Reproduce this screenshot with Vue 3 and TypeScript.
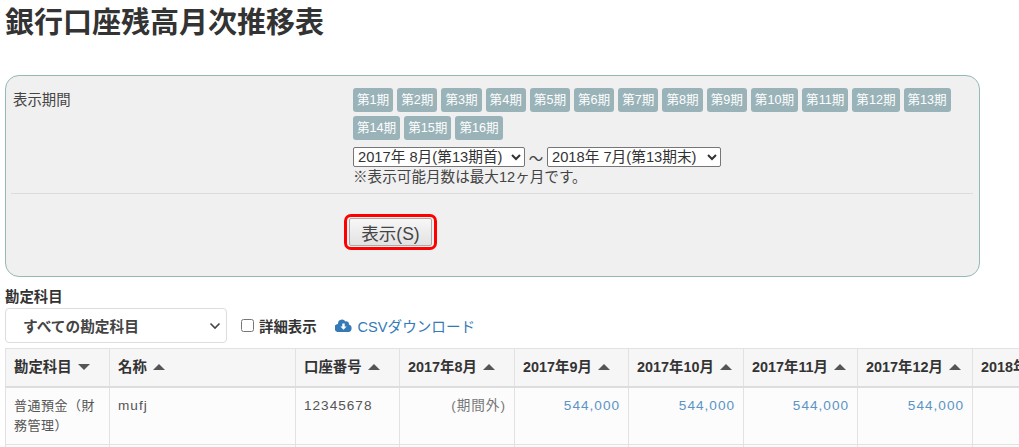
<script setup lang="ts">
const periods = Array.from({ length: 16 }, (_, i) => `第${i + 1}期`);

interface Column {
  label: string;
  width: number;
  dir: "up" | "down";
}

const columns: Column[] = [
  { label: "勘定科目", width: 104, dir: "down" },
  { label: "名称", width: 186, dir: "up" },
  { label: "口座番号", width: 104, dir: "up" },
  { label: "2017年8月", width: 115, dir: "up" },
  { label: "2017年9月", width: 114, dir: "up" },
  { label: "2017年10月", width: 115, dir: "up" },
  { label: "2017年11月", width: 114, dir: "up" },
  { label: "2017年12月", width: 115, dir: "up" },
  { label: "2018年1月", width: 115, dir: "up" },
];

const amounts = ["544,000", "544,000", "544,000", "544,000"];
</script>

<template>
  <div class="page">
    <h2 class="title">銀行口座残高月次推移表</h2>

    <form class="panel" @submit.prevent>
      <div class="panel-row">
        <div class="panel-label">表示期間</div>
        <div class="panel-body">
          <div class="periods">
            <span v-for="p in periods" :key="p" class="period">{{ p }}</span>
          </div>
          <div class="range">
            <select class="range-select">
              <option>2017年 8月(第13期首)</option>
            </select>
            <span class="tilde">～</span>
            <select class="range-select">
              <option>2018年 7月(第13期末)</option>
            </select>
          </div>
          <div class="note">※表示可能月数は最大12ヶ月です。</div>
        </div>
      </div>
      <div class="panel-actions">
        <div class="highlight">
          <button class="submit" type="submit">表示(S)</button>
        </div>
      </div>
    </form>

    <div class="filter-label">勘定科目</div>
    <div class="filters">
      <div class="account-select">
        <span>すべての勘定科目</span>
        <svg class="chevron" width="12" height="8" viewBox="0 0 12 8">
          <path d="M1.500 1.500 6 6l4.500-4.500" fill="none" stroke="#444" stroke-width="1.600" />
        </svg>
      </div>
      <label class="detail">
        <input type="checkbox" class="detail-check" />
        <span>詳細表示</span>
      </label>
      <a class="csv" href="#">
        <svg class="cloud" width="17" height="13" viewBox="0 0 17 13">
          <path
            d="M13.800 5.600A2.600 2.600 0 0 0 10.400 2.400 4 4 0 0 0 3 4.500v.4A3.800 3.800 0 0 0 4 13h9.500a3.800 3.800 0 0 0 .3-7.400Z"
            fill="#337ab7"
          />
          <path d="M7.300 4.500h2.400v3h1.900L8.500 10.800 5.400 7.500h1.900Z" fill="#fff" />
        </svg>
        <span>CSVダウンロード</span>
      </a>
    </div>

    <table class="ledger">
      <colgroup>
        <col v-for="c in columns" :key="c.label" :style="{ width: c.width + 'px' }" />
      </colgroup>
      <thead>
        <tr>
          <th v-for="c in columns" :key="c.label">
            {{ c.label }}
            <i :class="['sort', c.dir]" />
          </th>
        </tr>
      </thead>
      <tbody>
        <tr>
          <td class="kana">普通預金（財務管理）</td>
          <td>mufj</td>
          <td>12345678</td>
          <td class="num muted">(期間外)</td>
          <td v-for="(a, i) in amounts" :key="i" class="num">
            <a href="#">{{ a }}</a>
          </td>
          <td class="num"></td>
        </tr>
        <tr class="next">
          <td v-for="c in columns" :key="c.label"></td>
        </tr>
      </tbody>
    </table>
  </div>
</template>

<style>
html,
body {
  margin: 0;
  background: #fff;
  overflow: hidden;
}
</style>

<style scoped>
.page {
  width: 1019px;
  height: 447px;
  overflow: hidden;
  box-sizing: border-box;
  padding: 0 0 0 5px;
  font-family: "Liberation Sans", "Noto Sans CJK JP", sans-serif;
  font-size: 14.4px;
  color: #333;
}

.title {
  margin: 0;
  padding-top: 5px;
  height: 75px;
  box-sizing: border-box;
  font-size: 29px;
  line-height: 36px;
  font-weight: 700;
}

.panel {
  width: 975px;
  height: 202px;
  box-sizing: border-box;
  border: 1px solid #94b8b4;
  border-radius: 14px;
  background: #f0f0f0;
  padding: 12px 6px 0 5px;
}

.panel-row {
  display: flex;
  height: 105px;
  border-bottom: 1px solid #dcdcdc;
}

.panel-label {
  width: 342px;
  padding-left: 2px;
  padding-top: 2px;
  box-sizing: border-box;
  line-height: 20px;
  color: #444;
}

.panel-body {
  flex: 1;
}

.periods {
  display: flex;
  flex-wrap: wrap;
  gap: 4px;
}

.period {
  height: 24px;
  padding: 0 4px;
  border-radius: 3px;
  background: #9ab3b8;
  color: #fff;
  font-size: 12.600px;
  line-height: 24px;
}

.range {
  display: flex;
  align-items: center;
  margin-top: 7px;
  height: 20px;
}

.range-select {
  width: 172px;
  height: 20px;
  font-family: inherit;
  font-size: 14.700px;
  color: #333;
  background: #fff;
  border: 1px solid #767676;
  border-radius: 2px;
  padding: 0;
}

.range-select:last-child {
  width: 174px;
}

.tilde {
  width: 22px;
  text-align: center;
  color: #444;
}

.note {
  line-height: 20px;
  color: #444;
  font-size: 14.600px;
}

.panel-actions {
  padding: 20px 0 0 333px;
}

.highlight {
  display: inline-block;
  border: 3px solid #f00;
  border-radius: 7px;
  padding: 1px 2px;
  line-height: 0;
}

.submit {
  width: 83px;
  height: 28px;
  border: 1px solid #aaa;
  border-radius: 2px;
  background: linear-gradient(#f7f7f7, #e2e2e2);
  font-family: inherit;
  font-size: 17.500px;
  color: #444;
  padding: 0;
}

.filter-label {
  margin-top: 12px;
  height: 19px;
  line-height: 17px;
  font-weight: 700;
}

.filters {
  display: flex;
  align-items: center;
  height: 35px;
}

.account-select {
  width: 222px;
  height: 35px;
  box-sizing: border-box;
  display: flex;
  align-items: center;
  justify-content: space-between;
  padding: 0 5px 0 17px;
  border: 1px solid #ddd;
  border-radius: 4px;
  background: #fff;
  color: #444;
  font-size: 14.700px;
  font-weight: 700;
}

.detail {
  display: flex;
  align-items: center;
  margin-left: 14px;
  font-weight: 700;
}

.detail-check {
  width: 13px;
  height: 13px;
  margin: 0 5px 0 0;
}

.csv {
  display: flex;
  align-items: center;
  margin-left: 18px;
  color: #337ab7;
  font-size: 14.600px;
  text-decoration: none;
}

.cloud {
  margin-right: 6px;
}

.ledger {
  margin-top: 5px;
  table-layout: fixed;
  width: 1072px;
  border-collapse: collapse;
}

.ledger th,
.ledger td {
  border: 1px solid #e2e2e2;
  padding: 8px;
  line-height: 20px;
  vertical-align: top;
  text-align: left;
}

.ledger th {
  height: 38px;
  box-sizing: border-box;
  background: #f6f6f6;
  border-bottom: 2px solid #ddd;
  font-weight: 700;
  white-space: nowrap;
  vertical-align: middle;
  padding: 0 8px;
}

.ledger td {
  height: 55px;
  box-sizing: border-box;
  color: #555;
  letter-spacing: 1px;
  font-size: 13.600px;
  background: #fcfcfc;
}

.ledger td.kana {
  font-size: 13px;
  letter-spacing: 0.500px;
}

.ledger td.num {
  text-align: right;
}

.ledger td.muted {
  color: #777;
}

.ledger td a {
  color: #5b94c5;
  text-decoration: none;
}

.next td {
  height: 20px;
}

.sort {
  display: inline-block;
  width: 0;
  height: 0;
  margin-left: 2px;
  vertical-align: 2px;
  border-left: 6px solid transparent;
  border-right: 6px solid transparent;
}

.sort.up {
  border-bottom: 6px solid #555;
}

.sort.down {
  border-top: 6px solid #555;
}
</style>
